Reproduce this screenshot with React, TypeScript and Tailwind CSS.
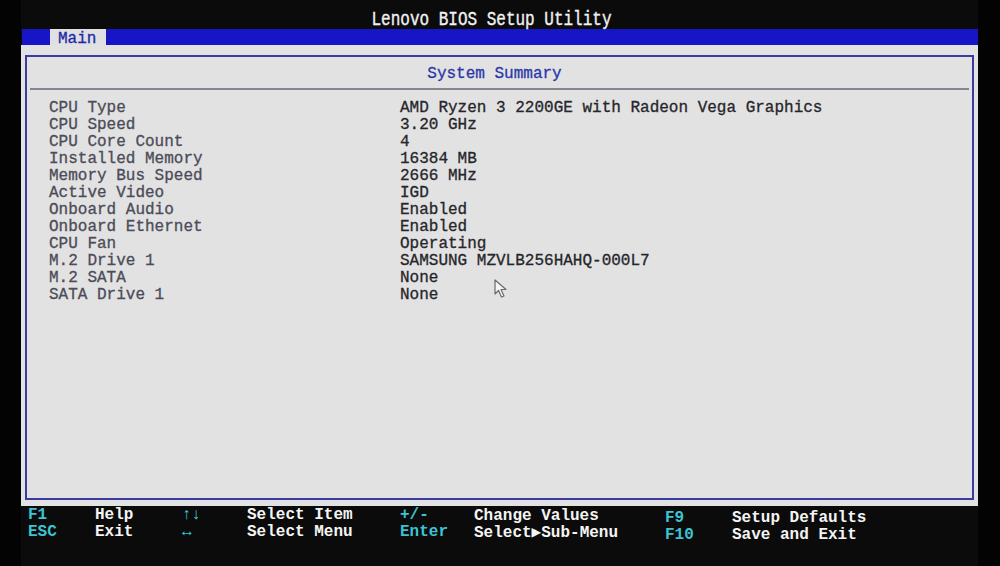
import React from "react";

const rows: [string, string][] = [
  ["CPU Type", "AMD Ryzen 3 2200GE with Radeon Vega Graphics"],
  ["CPU Speed", "3.20 GHz"],
  ["CPU Core Count", "4"],
  ["Installed Memory", "16384 MB"],
  ["Memory Bus Speed", "2666 MHz"],
  ["Active Video", "IGD"],
  ["Onboard Audio", "Enabled"],
  ["Onboard Ethernet", "Enabled"],
  ["CPU Fan", "Operating"],
  ["M.2 Drive 1", "SAMSUNG MZVLB256HAHQ-000L7"],
  ["M.2 SATA", "None"],
  ["SATA Drive 1", "None"],
];

const mono = { fontFamily: '"Liberation Mono", "DejaVu Sans Mono", monospace' };

export default function App() {
  return (
    <div
      className="w-[1000px] h-[566px] bg-[#030303] overflow-hidden flex flex-col text-[16px] leading-[17px]"
      style={mono}
    >
      <div className="ml-[21px] w-[957px] h-[566px] bg-[#0b0b0b] flex flex-col">
        {/* title */}
        <div className="h-[29px] flex justify-center pt-[12px] pr-[16px]">
          <span className="inline-block h-[17px] text-[#f2f2f2] scale-y-[1.25] [-webkit-text-stroke:0.3px_#f2f2f2]">
            Lenovo BIOS Setup Utility
          </span>
        </div>
        {/* menu bar */}
        <div className="h-[16px] bg-[#1616c6] flex ml-[1px]">
          <div className="ml-[28px] w-[56px] h-[17px] bg-[#e0e0e2] text-[#1c2aa6] pl-[8px] pt-[2px] leading-[17px] [-webkit-text-stroke:0.3px_#1c2aa6]">
            Main
          </div>
        </div>
        {/* content */}
        <div className="h-[461px] bg-[#e2e2e3] pt-[10px] pl-[4px] pr-[4px] pb-[6px] flex flex-col">
          <div className="flex-1 border-2 border-[#3a3aa0] flex flex-col relative">
            <div className="h-[31px] flex items-center justify-center pr-[10px] pt-[4px] text-[#2a38a8] [-webkit-text-stroke:0.3px_#2a38a8]">
              System Summary
            </div>
            <div className="mx-[3px] h-[2px] bg-[#85858f]" />
            <div className="pt-[10px] pl-[22px] flex flex-col">
              {rows.map(([k, v]) => (
                <div key={k} className="flex h-[17px] items-center">
                  <div className="w-[351px] text-[#4c4c58] [-webkit-text-stroke:0.3px_#4c4c58]">{k}</div>
                  <div className="text-[#26262a] [-webkit-text-stroke:0.3px_#26262a]">{v}</div>
                </div>
              ))}
            </div>
            {/* mouse cursor */}
            <svg
              className="absolute left-[467px] top-[222px]"
              width="15"
              height="20"
              viewBox="0 0 15 20"
            >
              <path
                d="M1 1 L1 15 L4.5 11.5 L7.5 18 L10 17 L7 10.5 L12 10.5 Z"
                fill="#f4f4f4"
                stroke="#6a6a70"
                strokeWidth="1.2"
                strokeLinejoin="round"
              />
            </svg>
          </div>
        </div>
        {/* footer */}
        <div className="flex-1 flex font-bold pt-[1px]">
          <div className="w-[74px] pl-[7px] flex flex-col text-[#3cc4d4]">
            <div>F1</div>
            <div>ESC</div>
          </div>
          <div className="w-[87px] flex flex-col text-[#f4f4f4]">
            <div>Help</div>
            <div>Exit</div>
          </div>
          <div className="w-[65px] flex flex-col text-[#3cc4d4]">
            <div>↑↓</div>
            <div>↔</div>
          </div>
          <div className="w-[153px] flex flex-col text-[#f4f4f4]">
            <div>Select Item</div>
            <div>Select Menu</div>
          </div>
          <div className="w-[74px] flex flex-col text-[#3cc4d4]">
            <div>+/-</div>
            <div>Enter</div>
          </div>
          <div className="w-[191px] flex flex-col text-[#f4f4f4] pt-[1px]">
            <div>Change Values</div>
            <div>Select▶Sub-Menu</div>
          </div>
          <div className="w-[67px] flex flex-col text-[#3cc4d4] pt-[3px]">
            <div>F9</div>
            <div>F10</div>
          </div>
          <div className="flex flex-col text-[#f4f4f4] pt-[3px]">
            <div>Setup Defaults</div>
            <div>Save and Exit</div>
          </div>
        </div>
      </div>
    </div>
  );
}
